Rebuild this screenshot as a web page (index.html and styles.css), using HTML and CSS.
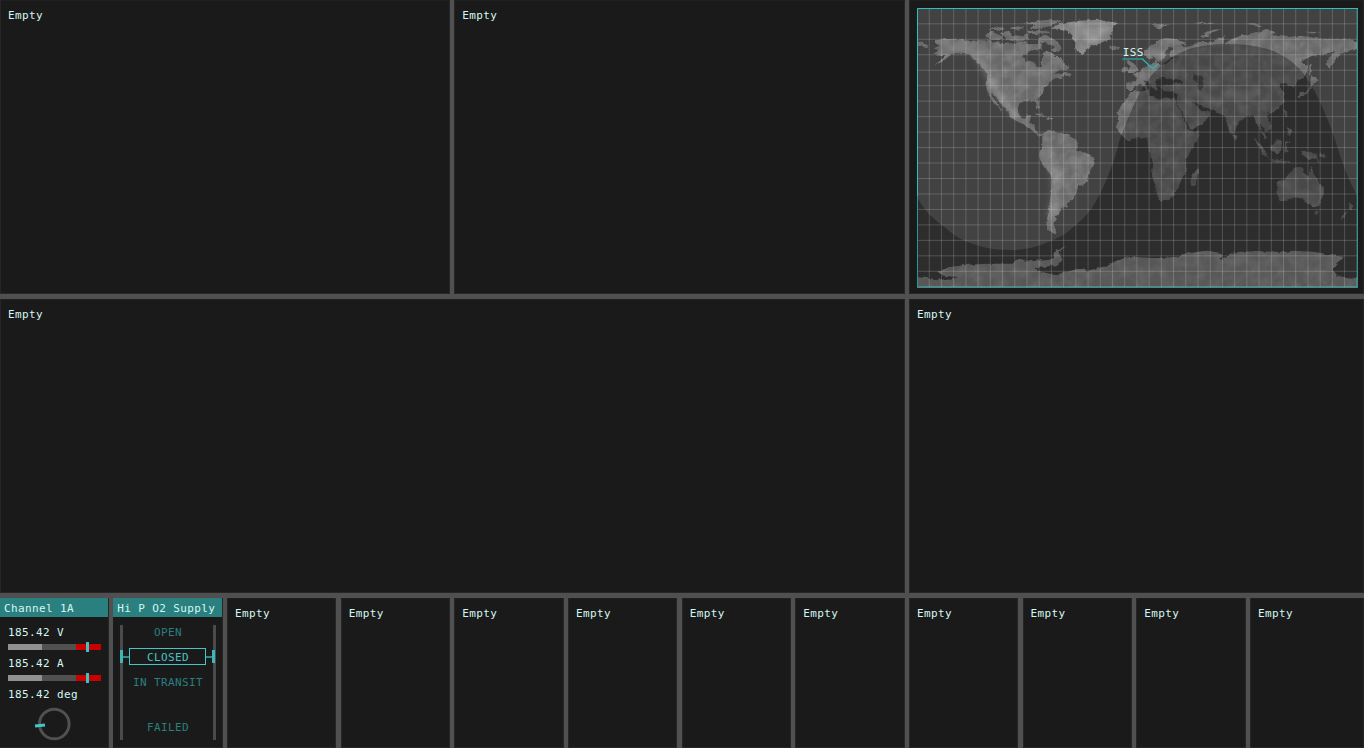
FILE: index.html
```html
<!DOCTYPE html>
<html lang="en">
<head>
<meta charset="utf-8">
<title>Station Display</title>
<link rel="stylesheet" href="styles.css">
</head>
<body>
<main class="board">
  <section class="panel span4">Empty</section>
  <section class="panel span4">Empty</section>
  <section class="panel span4 map-panel">
    <svg class="map" viewBox="36 24 1323 840" preserveAspectRatio="none">
      <defs>
        <filter id="terrain" x="0" y="0" width="1400" height="900" filterUnits="userSpaceOnUse" color-interpolation-filters="sRGB">
          <feTurbulence type="fractalNoise" baseFrequency="0.07" numOctaves="3" seed="4" result="n"/>
          <feDisplacementMap in="SourceGraphic" in2="n" scale="11" xChannelSelector="R" yChannelSelector="G" result="coast"/>
          <feTurbulence type="fractalNoise" baseFrequency="0.03" numOctaves="5" seed="9" result="m"/>
          <feColorMatrix in="m" type="matrix" values="0 0 0 0 1  0 0 0 0 1  0 0 0 0 1  0.3 0 0 0 -0.1" result="grain"/>
          <feComposite in="grain" in2="coast" operator="in" result="lit"/>
          <feMerge><feMergeNode in="coast"/><feMergeNode in="lit"/></feMerge>
        </filter>
        <filter id="soft" x="-30%" y="-30%" width="160%" height="160%"><feGaussianBlur stdDeviation="10"/></filter>
        <clipPath id="frame"><rect x="36" y="24" width="1323" height="840"/></clipPath>
      </defs>
      <rect class="ocean" x="36" y="24" width="1323" height="840"/>
      <g clip-path="url(#frame)">
        <g class="land" filter="url(#terrain)">
          <!-- North and Central America -->
          <path d="M90 121L112 118 155 116 196 122 230 120 262 124 300 131 330 129 352 124 371 132 395 132 404 122 415 135 407 146 386 150 363 158 354 170 360 180 386 186 401 204 408 198 407 186 414 175 413 160 425 152 440 160 450 170 468 172 477 188 493 205 490 211 465 209 446 222 460 220 462 228 480 215 500 222 496 228 478 227 462 238 452 230 437 245 433 255 417 262 414 278 399 292 398 299 405 315 404 328 397 325 391 307 375 304 345 308 338 323 340 340 351 355 361 356 364 345 378 346 376 358 371 368 388 374 391 389 400 402 412 400 409 409 397 406 381 391 366 378 345 369 315 352 312 338 291 316 270 290 258 278 262 289 278 313 294 335 287 331 266 306 251 285 244 264 246 240 248 222 237 212 226 197 211 181 196 167 180 159 157 158 139 163 112 185 86 196 108 181 121 168 103 168 88 160 100 150 86 145 104 137 90 130Z"/>
          <path d="M36 125L50 125 70 137 65 145 46 138 36 137Z"/>
          <!-- Arctic islands -->
          <path d="M240 106L256 95 279 101 294 110 288 119 260 119 247 116ZM250 90L275 80 300 84 276 90ZM283 98L312 92 323 105 350 108 366 100 372 118 341 125 307 121 300 110ZM314 84L340 79 358 83 337 90ZM352 70L384 66 420 60 474 62 444 73 420 83 395 87 371 84 394 76ZM367 92L395 91 437 95 430 100 390 102 370 100ZM408 107L427 104 448 119 463 128 467 144 459 155 439 149 450 141 426 130 410 128 400 115Z"/>
          <path class="bright" d="M434 85L470 70 515 63 575 59 625 66 640 70 620 78 624 91 614 105 619 117 598 124 580 132 558 139 545 147 540 159 530 164 516 156 510 140 512 128 503 118 502 106 486 93 458 89Z"/>
          <path d="M612 141L629 137 645 141 640 149 622 151ZM388 341L407 341 425 351 412 350ZM425 353L446 354 438 360 426 359Z"/>
          <!-- South America -->
          <path d="M412 401L433 389 459 399 481 399 507 416 521 431 514 449 548 461 570 475 568 492 556 510 549 540 541 549 519 560 515 578 498 603 485 611 488 622 467 628 461 645 448 648 456 658 446 668 446 682 455 698 440 700 424 684 424 665 432 632 434 606 438 578 441 543 438 526 420 507 403 471 404 453 411 446Z"/>
          <!-- Europe and Asia -->
          <path d="M664 270L664 246 693 244 696 234 683 222 703 215 712 204 728 196 744 193 748 180 758 178 756 192 783 192 799 181 806 175 822 170 797 170 792 158 806 144 794 141 778 158 780 172 768 185 755 180 747 170 731 176 716 168 718 154 739 137 755 122 784 114 810 117 836 127 845 136 822 136 839 143 859 134 885 125 897 126 921 125 946 112 958 108 957 130 983 116 1003 108 1051 97 1085 87 1112 96 1100 105 1150 111 1190 107 1238 115 1275 116 1308 118 1345 119 1359 124 1359 148 1335 148 1327 157 1306 161 1291 184 1273 206 1265 194 1267 176 1285 161 1291 153 1255 166 1222 167 1196 180 1187 190 1210 194 1206 217 1195 230 1178 237 1174 252 1164 264 1152 257 1141 250 1126 250 1124 261 1134 270 1137 289 1134 311 1116 327 1103 340 1089 337 1086 345 1098 368 1097 388 1085 397 1075 379 1065 372 1072 393 1087 413 1078 414 1065 389 1057 374 1045 345 1028 347 1003 367 990 384 987 404 974 397 965 369 958 347 940 340 924 327 905 325 882 314 862 301 875 318 889 334 912 334 915 344 899 365 875 379 859 392 849 374 830 337 818 315 815 300 818 281 804 275 776 273 769 262 779 254 795 257 810 250 835 250 826 240 812 236 800 238 784 237 774 229 764 238 747 244 758 267 748 272 738 259 729 248 712 234 722 253 733 267 725 270 707 252 692 258 680 270Z"/>
          <path d="M668 219L686 219 698 211 689 196 674 184 663 178 668 193 680 199 669 207ZM650 208L665 200 666 213 653 217ZM888 110L899 98 925 89 949 88 933 93 911 102 912 112ZM740 75L760 72 797 74 775 81 758 87ZM867 70L885 67 933 69 908 73ZM1028 69L1050 70 1076 80 1057 82ZM1197 95L1249 96 1218 101ZM1173 291L1186 279 1208 270 1218 252 1223 258 1209 279 1188 290ZM1214 248L1219 225 1242 241 1227 250 1217 258ZM1213 192L1219 194 1220 221 1213 229Z"/>
          <!-- Africa -->
          <path d="M678 273L704 275 731 268 733 287 764 299 781 292 813 296 816 316 831 344 852 390 871 397 882 394 879 414 861 444 852 463 842 482 845 515 831 535 821 559 808 584 793 600 766 605 755 577 741 526 745 490 732 459 728 429 730 415 712 417 697 410 674 421 655 411 635 388 639 354 637 339 650 314 661 298 671 285Z"/>
          <path d="M880 503L878 525 870 560 859 560 856 541 865 521ZM984 401L994 407 994 417 986 415Z"/>
          <!-- Indonesia and the Philippines -->
          <path d="M1044 411L1062 429 1079 447 1088 472 1075 466 1060 440ZM1094 440L1119 418 1131 424 1128 451 1116 461 1101 453ZM1087 474L1117 480 1155 484 1155 489 1114 488ZM1140 421L1155 425 1142 433 1151 454 1139 458ZM1136 326L1149 341 1145 351 1138 344ZM1147 379L1160 393 1155 407 1145 400ZM1189 452L1208 454 1229 460 1244 490 1226 475 1208 476 1190 462ZM1245 457L1265 468 1260 474 1243 469Z"/>
          <!-- Australia and New Zealand -->
          <path d="M1115 548L1144 531 1154 518 1166 510 1172 501 1195 503 1192 515 1211 530 1217 497 1226 520 1238 543 1257 563 1256 583 1243 617 1226 622 1205 607 1193 597 1171 591 1146 600 1124 606 1119 590ZM1229 634L1240 634 1236 645 1229 644ZM1331 608L1348 619 1338 634 1332 624ZM1328 633L1322 647 1307 660 1311 648Z"/>
          <!-- Antarctica -->
          <path class="ice" d="M30 831L92 837 138 839 160 831 115 827 97 815 141 800 178 795 230 792 263 791 324 791 333 779 370 782 430 780 448 773 444 763 455 752 485 736 461 757 473 779 460 795 428 799 388 807 412 816 450 825 488 815 515 807 534 807 546 812 598 800 638 781 675 770 754 775 822 770 836 762 869 757 908 752 951 760 944 780 987 757 1052 753 1134 756 1164 752 1225 755 1281 765 1317 771 1295 789 1284 811 1299 829 1359 835 1365 870 30 870Z"/>
          <!-- Caspian Sea -->
          <path class="water" d="M866 226L888 228 897 236 890 242 896 262 890 272 876 268 880 252 868 240Z"/>
        </g>
        <g class="ridges" filter="url(#soft)">
          <path d="M125 145L190 144 220 170 255 235 285 285 335 350M435 445L448 530 449 590 436 655M455 515L465 550M530 80L560 120 600 85M955 278L1020 293 1060 278M870 270L940 312M795 170L730 155"/>
        </g>
        <path class="night" d="M36 590C55 630 85 655 110 675 145 703 165 720 200 730 240 746 275 750 310 750 350 750 390 744 420 730 455 717 480 705 500 685 527 665 547 642 560 625 577 600 588 575 600 550 615 515 628 480 640 435 650 400 685 310 710 270 722 248 738 225 760 205 787 178 825 155 860 145 895 135 930 132 970 132 1010 132 1045 136 1080 145 1110 153 1135 166 1160 185 1185 205 1200 225 1215 250 1232 277 1248 310 1260 340 1275 376 1289 414 1300 450 1315 500 1340 560 1359 590V864H36Z"/>
        <path class="lattice" d="M72.700 27v834m36.650-834v834m36.650-834v834m36.650-834v834m36.650-834v834m36.650-834v834m36.650-834v834m36.650-834v834m36.650-834v834m36.650-834v834m36.650-834v834m36.650-834v834m36.650-834v834m36.650-834v834m36.650-834v834m36.650-834v834m36.650-834v834m36.650-834v834m36.650-834v834m36.650-834v834m36.650-834v834m36.650-834v834m36.650-834v834m36.650-834v834m36.650-834v834m36.650-834v834m36.650-834v834m36.650-834v834m36.650-834v834m36.650-834v834m36.650-834v834m36.650-834v834m36.650-834v834m36.650-834v834m36.650-834v834m36.650-834v834"/>
        <path class="lattice" d="M39 71.500h1317m-1317 46.400h1317m-1317 46.400h1317m-1317 46.400h1317m-1317 46.400h1317m-1317 46.400h1317m-1317 46.400h1317m-1317 46.400h1317m-1317 46.400h1317m-1317 46.400h1317m-1317 46.400h1317m-1317 46.400h1317m-1317 46.400h1317m-1317 46.400h1317m-1317 46.400h1317m-1317 46.400h1317m-1317 46.400h1317M39 859.500h1317"/>
      </g>
      <path class="frame-shade" d="M37.500 588V862.500H1357.500V25"/>
      <path class="frame-line" d="M37.500 588V25.500H1359"/>
      <path class="pointer faint" d="M652 177H715"/>
      <path class="pointer" d="M713 178L743 206 759 192"/>
      <text class="craft" x="653" y="168">ISS</text>
    </svg>
  </section>

  <section class="panel span8">Empty</section>
  <section class="panel span4">Empty</section>

  <section class="panel widget">
    <h2 class="title">Channel 1A</h2>
    <div class="channel">
      <div class="reading">185.42 V</div>
      <div class="bar"><i class="low"></i><i class="mid"></i><i class="high"></i><b class="tick"></b></div>
      <div class="reading">185.42 A</div>
      <div class="bar"><i class="low"></i><i class="mid"></i><i class="high"></i><b class="tick"></b></div>
      <div class="reading">185.42 deg</div>
      <svg class="dial" viewBox="0 0 40 36" width="40" height="36"><circle cx="21.300" cy="18" r="14.800"/><path d="M2 20L12 19"/></svg>
    </div>
  </section>
  <section class="panel widget">
    <h2 class="title">Hi P O2 Supply</h2>
    <div class="valve">
      <div class="rail"></div>
      <div class="states">
        <div class="state open">OPEN</div>
        <div class="state active">CLOSED</div>
        <div class="state transit">IN TRANSIT</div>
        <div class="state failed">FAILED</div>
      </div>
      <div class="rail"></div>
    </div>
  </section>
  <section class="panel">Empty</section>
  <section class="panel">Empty</section>
  <section class="panel">Empty</section>
  <section class="panel">Empty</section>
  <section class="panel">Empty</section>
  <section class="panel">Empty</section>
  <section class="panel">Empty</section>
  <section class="panel">Empty</section>
  <section class="panel">Empty</section>
  <section class="panel">Empty</section>
</main>
</body>
</html>
```
FILE: styles.css
```css
* { box-sizing: border-box; }

body {
  margin: 0;
  background: #505050;
  color: #d4f7f3;
  font: 11px/14px "DejaVu Sans Mono", monospace;
  letter-spacing: .378px;
}

.board {
  display: grid;
  grid-template-columns: 108.950px repeat(10, 109.250px) 1fr;
  grid-template-rows: 294px 294px 150px;
  column-gap: 4.417px;
  row-gap: 5px;
  width: 1364px;
  height: 748px;
  overflow: hidden;
}

.panel {
  min-width: 0;
  padding: 8px 7px 7px;
  background: #1a1a1a;
  border: 1px solid #262626;
  border-top-color: #202020;
  overflow: hidden;
}

.span4 { grid-column: span 4; }
.span8 { grid-column: span 8; }

.map-panel { padding-top: 7px; }
.map { display: block; width: 441px; height: 280px; }
.ocean { fill: #424242; }
.land { fill: #696969; }
.bright { fill: #7c7c7c; }
.ice { fill: #7f7f7f; }
.water { fill: #424242; }
.ridges { fill: none; stroke: #fff; stroke-opacity: .22; stroke-width: 16; }
.frame-line { fill: none; stroke: #24c4c4; stroke-width: 3; }
.frame-shade { fill: none; stroke: #229a9a; stroke-width: 3; }
.night { fill: #000; fill-opacity: .31; }
.lattice { fill: none; stroke: #fff; stroke-opacity: .18; stroke-width: 3; }
.pointer { fill: none; stroke: #2cb5b8; stroke-width: 4; }
.faint { stroke: #2a9090; stroke-width: 5; }
.craft { fill: #d4f7f3; font-size: 33px; letter-spacing: 1.100px; }

.widget { padding: 0; border-width: 0 1px 1px 0; }
.title {
  margin: 0;
  height: 19px;
  padding: 4px 0 0 4px;
  background: #2a7f7f;
  font: inherit;
  white-space: nowrap;
}

.channel { padding: 8px 8px 0; }
.reading { height: 19px; line-height: 16px; }
.bar {
  position: relative;
  display: flex;
  width: 93px;
  height: 6px;
  margin-bottom: 6px;
}
.low { width: 34px; background: #919191; }
.mid { width: 34px; background: #505050; }
.high { width: 25px; background: #c80000; }
.tick {
  position: absolute;
  left: 78px;
  top: -2px;
  width: 2.500px;
  height: 10px;
  background: #45bfbf;
}
.dial { display: block; margin-left: 25px; }
.dial circle { fill: none; stroke: #505050; stroke-width: 3; }
.dial path { stroke: #45c6c6; stroke-width: 3.200; }

.valve {
  display: flex;
  justify-content: space-between;
  height: 130px;
  padding: 8px 6px 7px 7px;
}
.rail { width: 3px; background: #4b4b4b; }
.states { width: 77px; color: #2a7f7f; text-align: center; }
.state { height: 14px; }
.open { line-height: 16px; }
.active {
  position: relative;
  height: 17px;
  margin-top: 9px;
  border: 1px solid #45c6c6;
  color: #45c6c6;
  line-height: 18px;
}
.active::before,
.active::after {
  content: "";
  position: absolute;
  top: 1px;
  width: 6px;
  height: 13px;
  background: linear-gradient(#2f8888, #2f8888) center / 100% 2px no-repeat;
}
.active::before { right: 100%; margin-right: 1px; border-left: 3px solid #3fb5b5; }
.active::after { left: 100%; margin-left: 1px; border-right: 3px solid #3fb5b5; }
.transit { margin-top: 11px; }
.failed { margin-top: 31px; }
```
